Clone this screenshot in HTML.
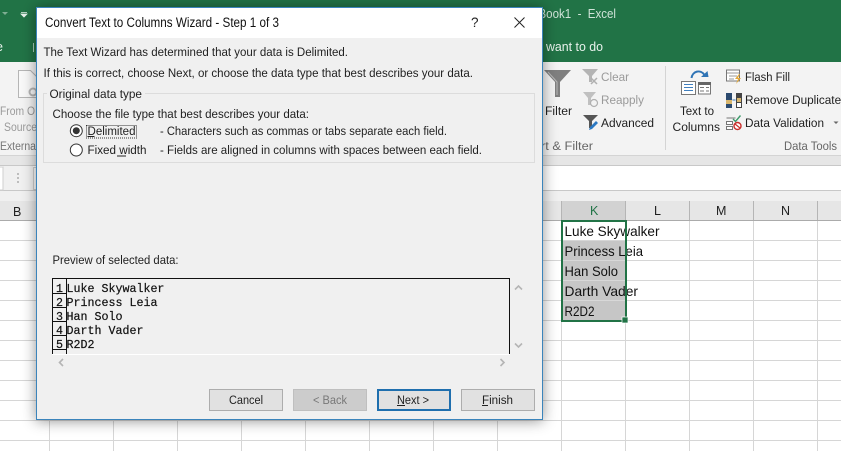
<!DOCTYPE html>
<html><head><meta charset="utf-8"><title>Convert Text to Columns Wizard</title>
<style>
html,body{margin:0;padding:0;background:#fff;width:841px;height:451px;overflow:hidden}
svg{display:block}
text{font-family:"Liberation Sans",sans-serif;font-size:12.2px;fill:#1f1f1f;white-space:pre}
.m{font-family:"Liberation Mono",monospace;font-size:11.67px;fill:#111;stroke:#111;stroke-width:.2}
.c{font-size:14px;fill:#111}
</style></head><body>
<svg width="841" height="451" viewBox="0 0 841 451" xmlns="http://www.w3.org/2000/svg">
<defs>
<filter id="sh" x="-10%" y="-10%" width="120%" height="120%"><feDropShadow dx="0" dy="1" stdDeviation="7" flood-color="#000" flood-opacity=".42"/></filter>
</defs>
<!-- Excel background -->
<rect width="841" height="62" fill="#217346"/>
<rect y="62" width="841" height="93" fill="#f3f3f3"/>
<rect y="155" width="841" height="10" fill="#e6e6e6"/>
<rect y="155" width="841" height="1" fill="#d4d4d4"/>
<rect y="165" width="841" height="1" fill="#c8c8c8"/>
<rect y="166" width="841" height="24" fill="#fff"/>
<rect x="3" y="166" width="30" height="24" fill="#f0f0f0"/>
<rect y="190" width="841" height="1" fill="#c8c8c8"/>
<rect y="191" width="841" height="10" fill="#f0f0f0"/>
<rect y="201" width="841" height="19" fill="#e6e6e6"/>
<rect x="561" y="201" width="64" height="19" fill="#d2d2d2"/>
<rect y="220" width="841" height="1" fill="#ababab"/>
<g fill="#b5b5b5"><rect x="49" y="201" width="1" height="19"/><rect x="561" y="201" width="1" height="19"/><rect x="625" y="201" width="1" height="19"/><rect x="689" y="201" width="1" height="19"/><rect x="753" y="201" width="1" height="19"/><rect x="817" y="201" width="1" height="19"/></g>
<!-- grid -->
<g fill="#d6d6d6">
<rect y="240" width="841" height="1"/><rect y="260" width="841" height="1"/><rect y="280" width="841" height="1"/><rect y="300" width="841" height="1"/><rect y="320" width="841" height="1"/><rect y="340" width="841" height="1"/><rect y="360" width="841" height="1"/><rect y="380" width="841" height="1"/><rect y="400" width="841" height="1"/><rect y="420" width="841" height="1"/><rect y="440" width="841" height="1"/>
<rect x="49" y="221" width="1" height="230"/><rect x="113" y="221" width="1" height="230"/><rect x="177" y="221" width="1" height="230"/><rect x="241" y="221" width="1" height="230"/><rect x="305" y="221" width="1" height="230"/><rect x="369" y="221" width="1" height="230"/><rect x="433" y="221" width="1" height="230"/><rect x="497" y="221" width="1" height="230"/><rect x="561" y="221" width="1" height="230"/><rect x="625" y="221" width="1" height="230"/><rect x="689" y="221" width="1" height="230"/><rect x="753" y="221" width="1" height="230"/><rect x="817" y="221" width="1" height="230"/>
</g>
<!-- selection -->
<rect x="562" y="241" width="63" height="79" fill="#c6c6c6"/>
<g fill="#d8d8d8"><rect x="562" y="260" width="63" height="1"/><rect x="562" y="280" width="63" height="1"/><rect x="562" y="300" width="63" height="1"/></g>
<g>
<text class="c" x="564.5" y="236" textLength="95" lengthAdjust="spacingAndGlyphs">Luke Skywalker</text>
<text class="c" x="564.5" y="256" textLength="78.5" lengthAdjust="spacingAndGlyphs">Princess Leia</text>
<text class="c" x="564.5" y="276" textLength="53.5" lengthAdjust="spacingAndGlyphs">Han Solo</text>
<text class="c" x="564.5" y="296" textLength="73.5" lengthAdjust="spacingAndGlyphs">Darth Vader</text>
<text class="c" x="564.5" y="316" textLength="30" lengthAdjust="spacingAndGlyphs">R2D2</text>
</g>
<rect x="562" y="221" width="64" height="100" fill="none" stroke="#217346" stroke-width="2"/>
<rect x="622" y="317" width="6" height="6" fill="#217346" stroke="#fff" stroke-width=".7"/>
<!-- headers -->
<text x="590" y="215" style="font-size:12.5px;fill:#217346">K</text>
<text x="654" y="215" style="font-size:12.5px">L</text>
<text x="716" y="215" style="font-size:12.5px">M</text>
<text x="781" y="215" style="font-size:12.5px">N</text>
<text x="13" y="216" style="font-size:12.5px">B</text>
<!-- green bar text -->
<text x="538.500" y="18" textLength="77.500" lengthAdjust="spacingAndGlyphs" style="font-size:12.5px;fill:#cfe3d8">Book1  -  Excel</text>
<text x="546" y="51" textLength="57" lengthAdjust="spacingAndGlyphs" style="font-size:12.5px;fill:#e8f2ec">want to do</text>
<text x="-4" y="51" style="font-size:12.5px;fill:#e8f2ec">e</text>
<rect x="33" y="43" width="1" height="9" fill="#a9cdb8"/>
<path d="M2 12h6l-3 3z" fill="#7fae93"/><path d="M21 12.5h6M21 14h6l-3 3z" stroke="#e8f2ec" stroke-width=".8" fill="#e8f2ec"/>
<!-- left ribbon -->
<path d="M18.5 70.5h12l6 6v21h-18z" fill="#f8f8f8" stroke="#b5b5b5"/>
<circle cx="33" cy="92" r="3.5" fill="none" stroke="#b5b5b5" stroke-width="2"/>
<text x="0" y="115" textLength="35" lengthAdjust="spacingAndGlyphs" style="fill:#9a9a9a">From O</text>
<text x="4" y="131" textLength="33" lengthAdjust="spacingAndGlyphs" style="fill:#9a9a9a">Source</text>
<text x="0" y="150" textLength="36" lengthAdjust="spacingAndGlyphs" style="fill:#777">Externa</text>
<rect x="-1" y="167" width="4" height="23" fill="#fff" stroke="#cfcfcf"/>
<g fill="#bdbdbd"><rect x="17" y="173" width="2" height="2"/><rect x="17" y="177" width="2" height="2"/><rect x="17" y="181" width="2" height="2"/></g>
<rect x="33.500" y="167.500" width="10" height="22" fill="#fff" stroke="#cfcfcf"/>
<!-- sort & filter -->
<path d="M544 70h27l-11 12v15h-5V82z" fill="#7f7f7f"/>
<path d="M548 72l9 10v13" fill="none" stroke="#b8b8b8" stroke-width="1"/>
<text x="545" y="115" textLength="27" lengthAdjust="spacingAndGlyphs">Filter</text>
<path d="M582 69h16l-6 7v6h-3v-6z" fill="#b4b4b4"/><path d="M591 78l6 6m0-6l-6 6" stroke="#b0b0b0" stroke-width="1.500"/>
<text x="601" y="81" textLength="28" lengthAdjust="spacingAndGlyphs" style="fill:#9a9a9a">Clear</text>
<path d="M583 92h13l-5 6v7h-3v-7z" fill="#c0c0c0"/><circle cx="594" cy="103" r="3.500" fill="none" stroke="#b0b0b0" stroke-width="1.200"/>
<text x="601" y="104" textLength="43" lengthAdjust="spacingAndGlyphs" style="fill:#9a9a9a">Reapply</text>
<path d="M583 115h15l-6 6v7h-3v-7z" fill="#555"/><path d="M589 130l1-3 6-6 2 2-6 6z" fill="#2b78c2"/>
<text x="601" y="127" textLength="53" lengthAdjust="spacingAndGlyphs">Advanced</text>
<text x="541" y="150" textLength="52" lengthAdjust="spacingAndGlyphs" style="fill:#666">rt &amp; Filter</text>
<rect x="665" y="66" width="1" height="84" fill="#d4d4d4"/>
<!-- text to columns -->
<path d="M691.500 78c1-7 9-9 13-3" fill="none" stroke="#2f74b5" stroke-width="2"/><path d="M701 77h7.500l-1-6z" fill="#2f74b5"/>
<rect x="681.500" y="81.500" width="14" height="13" fill="#fff" stroke="#777"/>
<path d="M684 84.500h9M684 87.500h9M684 90.500h9" stroke="#3f7fbf" stroke-width="1"/>
<rect x="698.500" y="82.500" width="12" height="11.500" fill="#fff" stroke="#777"/><rect x="698" y="82" width="13" height="3" fill="#666"/>
<path d="M700 87.500h4M706 87.500h3M700 91h4M706 91h3" stroke="#777"/>
<text x="680" y="115" textLength="34" lengthAdjust="spacingAndGlyphs">Text to</text>
<text x="672.500" y="131" textLength="47.500" lengthAdjust="spacingAndGlyphs">Columns</text>
<!-- data tools icons -->
<rect x="726.500" y="70" width="13" height="11" fill="#fff" stroke="#777"/><path d="M727 73h12M729 76h8M729 79h5" stroke="#9a9a9a"/>
<path d="M739 74l-4 5h3l-2 5 5-6h-3l2-4z" fill="#e3a83a"/>
<rect x="726" y="93" width="6" height="15" fill="#2b4a6f"/><rect x="726" y="100" width="6" height="4" fill="#d8b66d"/>
<rect x="736" y="93" width="6" height="15" fill="#444"/><rect x="737" y="98" width="4" height="4" fill="#d8b66d"/><rect x="737" y="103" width="4" height="4" fill="#fff"/>
<path d="M732.500 100h3" stroke="#2f74b5"/>
<path d="M726.500 118h9M726.500 121.500h6v3h-6zM726.500 126.500h6v3h-6z" fill="#fff" stroke="#777"/><path d="M733 119l2.500 2.500 5-6" fill="none" stroke="#3d9a6b" stroke-width="1.400"/>
<circle cx="737.500" cy="126" r="3.500" fill="#fff" stroke="#c9302c" stroke-width="1.400"/><path d="M735 124l5 4" stroke="#c9302c" stroke-width="1.200"/>
<text x="745" y="81" textLength="45" lengthAdjust="spacingAndGlyphs">Flash Fill</text>
<text x="745" y="104" textLength="102" lengthAdjust="spacingAndGlyphs">Remove Duplicates</text>
<text x="745" y="127" textLength="79" lengthAdjust="spacingAndGlyphs">Data Validation</text>
<path d="M833.500 121.500h5l-2.500 2.500z" fill="#666"/>
<text x="784" y="150" textLength="53" lengthAdjust="spacingAndGlyphs" style="fill:#666">Data Tools</text>

<!-- dialog -->
<rect x="36.500" y="7.500" width="506" height="412" fill="#f0f0f0" stroke="#3a84bb" filter="url(#sh)"/>
<rect x="37" y="8" width="505" height="30" fill="#fff"/>
<text x="45" y="27" textLength="234" lengthAdjust="spacingAndGlyphs" style="font-size:13.5px;fill:#111">Convert Text to Columns Wizard - Step 1 of 3</text>
<text x="471" y="27" style="font-size:13.5px;fill:#222">?</text>
<path d="M514.500 17.500l10 10m0-10l-10 10" stroke="#222" stroke-width="1"/>
<text x="43.500" y="56" textLength="304.500" lengthAdjust="spacingAndGlyphs">The Text Wizard has determined that your data is Delimited.</text>
<text x="43.500" y="77" textLength="429.500" lengthAdjust="spacingAndGlyphs">If this is correct, choose Next, or choose the data type that best describes your data.</text>
<rect x="43.500" y="93.500" width="491" height="69" fill="none" stroke="#dcdcdc"/>
<rect x="47" y="90" width="98" height="8" fill="#f0f0f0"/>
<text x="49.500" y="98" textLength="92.500" lengthAdjust="spacingAndGlyphs">Original data type</text>
<text x="52.500" y="118" textLength="256.500" lengthAdjust="spacingAndGlyphs">Choose the file type that best describes your data:</text>
<circle cx="76.300" cy="130.700" r="6" fill="#fff" stroke="#333"/><circle cx="76.300" cy="130.700" r="3.500" fill="#333"/>
<circle cx="76.300" cy="150" r="6" fill="#fff" stroke="#333"/>
<rect x="86.500" y="125.500" width="50" height="12.500" fill="none" stroke="#333" stroke-dasharray="1 1"/>
<text x="87.500" y="135" textLength="48" lengthAdjust="spacingAndGlyphs">Delimited</text>
<rect x="87.500" y="136" width="7" height="1" fill="#222"/>
<text x="160" y="135" textLength="287" lengthAdjust="spacingAndGlyphs">- Characters such as commas or tabs separate each field.</text>
<text x="87.500" y="154" textLength="59" lengthAdjust="spacingAndGlyphs">Fixed width</text>
<rect x="117" y="155.500" width="9" height="1" fill="#222"/>
<text x="160" y="154" textLength="322" lengthAdjust="spacingAndGlyphs">- Fields are aligned in columns with spaces between each field.</text>
<text x="52.500" y="264" textLength="126" lengthAdjust="spacingAndGlyphs">Preview of selected data:</text>
<!-- preview -->
<path d="M52.500 354V278.500H509.500V354M66.500 279V354" fill="none" stroke="#111"/>
<path d="M53 293.500h13M53 307.500h13M53 321.500h13M53 335.500h13M53 349.500h13" stroke="#111"/>
<rect x="52" y="354" width="458" height="1" fill="#fff"/>
<text class="m" x="56" y="292">1</text><text class="m" x="66.500" y="292">Luke Skywalker</text>
<text class="m" x="56" y="306">2</text><text class="m" x="66.500" y="306">Princess Leia</text>
<text class="m" x="56" y="320">3</text><text class="m" x="66.500" y="320">Han Solo</text>
<text class="m" x="56" y="334">4</text><text class="m" x="66.500" y="334">Darth Vader</text>
<text class="m" x="56" y="348">5</text><text class="m" x="66.500" y="348">R2D2</text>
<path d="M515 289.500l3.500-3.500 3.500 3.500M515 343.500l3.500 3.500 3.500-3.500M63 359l-3.500 3.500 3.500 3.500M500.500 359l3.500 3.500-3.500 3.500" fill="none" stroke="#b5b5b5" stroke-width="1.600"/>
<!-- buttons -->
<rect x="209.500" y="389.500" width="73" height="21" fill="#e1e1e1" stroke="#adadad"/>
<text x="229" y="404" textLength="34" lengthAdjust="spacingAndGlyphs">Cancel</text>
<rect x="293.500" y="389.500" width="73" height="21" fill="#cccccc" stroke="#bfbfbf"/>
<text x="313" y="404" textLength="34" lengthAdjust="spacingAndGlyphs" style="fill:#787878">&lt; Back</text>
<rect x="378" y="390" width="72" height="20" fill="#e1e1e1" stroke="#1f6fae" stroke-width="2"/>
<text x="397" y="404" textLength="32" lengthAdjust="spacingAndGlyphs">Next &gt;</text>
<rect x="397" y="405" width="8" height="1" fill="#222"/>
<rect x="461.500" y="389.500" width="73" height="21" fill="#e1e1e1" stroke="#adadad"/>
<text x="482" y="404" textLength="31" lengthAdjust="spacingAndGlyphs">Finish</text>
<rect x="482" y="405" width="6" height="1" fill="#222"/>
</svg>
</body></html>
